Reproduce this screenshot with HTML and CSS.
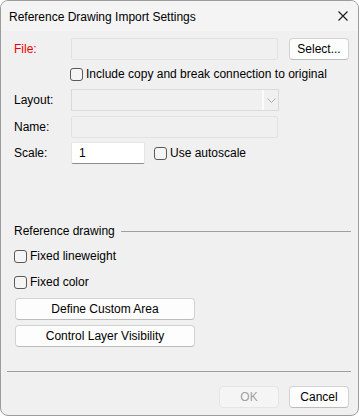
FILE: index.html
```html
<!DOCTYPE html>
<html lang="en">
<head>
    <meta charset="UTF-8">
    <title>Reference Drawing Import Settings</title>
    <link rel="stylesheet" href="styles.css">
</head>
<body>
    <div class="window">
        <div class="titlebar">
            <span class="title">Reference Drawing Import Settings</span>
            <svg class="close" width="10" height="10" viewBox="0 0 10 10">
                <path d="M0.5 0.5 L9.5 9.5 M9.5 0.5 L0.5 9.5" stroke="#1a1a1a" stroke-width="1.1" fill="none"/>
            </svg>
        </div>

        <div class="content">
            <div class="row file-row">
                <span class="label required">File:</span>
                <div class="input disabled file-input"></div>
                <button class="btn select-btn">Select...</button>
            </div>

            <label class="row check-row indent">
                <span class="checkbox"></span>
                <span>Include copy and break connection to original</span>
            </label>

            <div class="row layout-row">
                <span class="label">Layout:</span>
                <div class="combo">
                    <div class="combo-text"></div>
                    <div class="combo-arrow">
                        <svg width="9" height="5" viewBox="0 0 9 5">
                            <path d="M0.5 0.5 L4.5 4.5 L8.5 0.5" stroke="#a8a8a8" stroke-width="1" fill="none"/>
                        </svg>
                    </div>
                </div>
            </div>

            <div class="row name-row">
                <span class="label">Name:</span>
                <div class="input disabled name-input"></div>
            </div>

            <div class="row scale-row">
                <span class="label">Scale:</span>
                <div class="input scale-input">1</div>
                <label class="check-inline">
                    <span class="checkbox"></span>
                    <span>Use autoscale</span>
                </label>
            </div>

            <div class="group-title">
                <span>Reference drawing</span>
                <span class="group-line"></span>
            </div>

            <label class="row check-row lineweight-row">
                <span class="checkbox"></span>
                <span>Fixed lineweight</span>
            </label>

            <label class="row check-row color-row">
                <span class="checkbox"></span>
                <span>Fixed color</span>
            </label>

            <button class="btn wide-btn define-btn">Define Custom Area</button>
            <button class="btn wide-btn layer-btn">Control Layer Visibility</button>

            <div class="separator"></div>

            <div class="footer">
                <button class="btn disabled-btn">OK</button>
                <button class="btn">Cancel</button>
            </div>
        </div>
    </div>
</body>
</html>
```

FILE: styles.css
```css
html, body {
    margin: 0;
    padding: 0;
    background-color: #ffffff;
}
body {
    font-family: 'Liberation Sans', Arial, sans-serif;
    font-size: 12px;
    color: #000;
}
.window {
    width: 359px;
    height: 416px;
    box-sizing: border-box;
    border: 1px solid #9c9c9c;
    border-radius: 8px;
    background-color: #f0f0f0;
    overflow: hidden;
}
.titlebar {
    height: 30px;
    background-color: #f4f4f4;
    display: flex;
    align-items: center;
    padding: 0 10px 0 8px;
}
.title {
    flex: 1;
    font-size: 12px;
    margin-top: 1px;
}
.close {
    display: block;
}
.content {
    padding: 7px 9px 0 13px;
}
.row {
    display: flex;
    align-items: center;
}
.label {
    width: 57px;
    flex-shrink: 0;
}
.required {
    color: #f00000;
}
.input {
    box-sizing: border-box;
    height: 22px;
    border: 1px solid #e2e2e2;
    border-radius: 2px;
}
.disabled {
    background-color: #f0f0f0;
}
.file-row {
    height: 22px;
}
.file-input {
    width: 207px;
}
.btn {
    font-family: inherit;
    font-size: 12px;
    color: #000;
    box-sizing: border-box;
    height: 22px;
    width: 60px;
    padding: 0;
    background-color: #fdfdfd;
    border: 1px solid #d2d2d2;
    border-bottom-color: #bcbcbc;
    border-radius: 4px;
}
.select-btn {
    margin-left: 11px;
}
.check-row {
    height: 20px;
    margin-top: 4px;
}
.indent {
    padding-left: 56px;
}
.checkbox {
    box-sizing: border-box;
    width: 13px;
    height: 13px;
    border: 1px solid #5a5a5a;
    border-radius: 3px;
    background-color: #f5f5f5;
    margin-right: 3px;
    flex-shrink: 0;
}
.layout-row {
    margin-top: 5px;
    height: 22px;
}
.combo {
    box-sizing: border-box;
    width: 208px;
    height: 22px;
    display: flex;
    border: 1px solid #dadada;
    background-color: #f0f0f0;
}
.combo-text {
    flex: 1;
}
.combo-arrow {
    width: 14px;
    border-left: 2px solid #fbfbfb;
    display: flex;
    align-items: center;
    justify-content: center;
}
.name-row {
    margin-top: 5px;
    height: 22px;
}
.name-input {
    width: 207px;
}
.scale-row {
    margin-top: 4px;
    height: 22px;
}
.scale-input {
    width: 74px;
    background-color: #ffffff;
    border-color: #e6e6e6;
    border-bottom-color: #8c8c8c;
    padding: 2px 0 0 7px;
    line-height: 16px;
}
.check-inline {
    display: flex;
    align-items: center;
    margin-left: 9px;
}
.group-title {
    display: flex;
    align-items: center;
    height: 16px;
    margin-top: 59px;
    margin-right: -2px;
}
.group-line {
    flex: 1;
    height: 1px;
    background-color: #a0a0a0;
    margin-left: 6px;
}
.lineweight-row {
    margin-top: 7px;
}
.color-row {
    margin-top: 6px;
}
.wide-btn {
    display: block;
    width: 180px;
    margin-left: 1px;
}
.define-btn {
    margin-top: 6px;
}
.layer-btn {
    margin-top: 5px;
}
.separator {
    height: 1px;
    background-color: #a0a0a0;
    margin: 24px -2px 0 -7px;
}
.footer {
    display: flex;
    justify-content: flex-end;
    gap: 10px;
    margin-top: 14px;
}
.disabled-btn {
    background-color: #f5f5f5;
    border-color: #e5e5e5;
    color: #a0a0a0;
}
```
